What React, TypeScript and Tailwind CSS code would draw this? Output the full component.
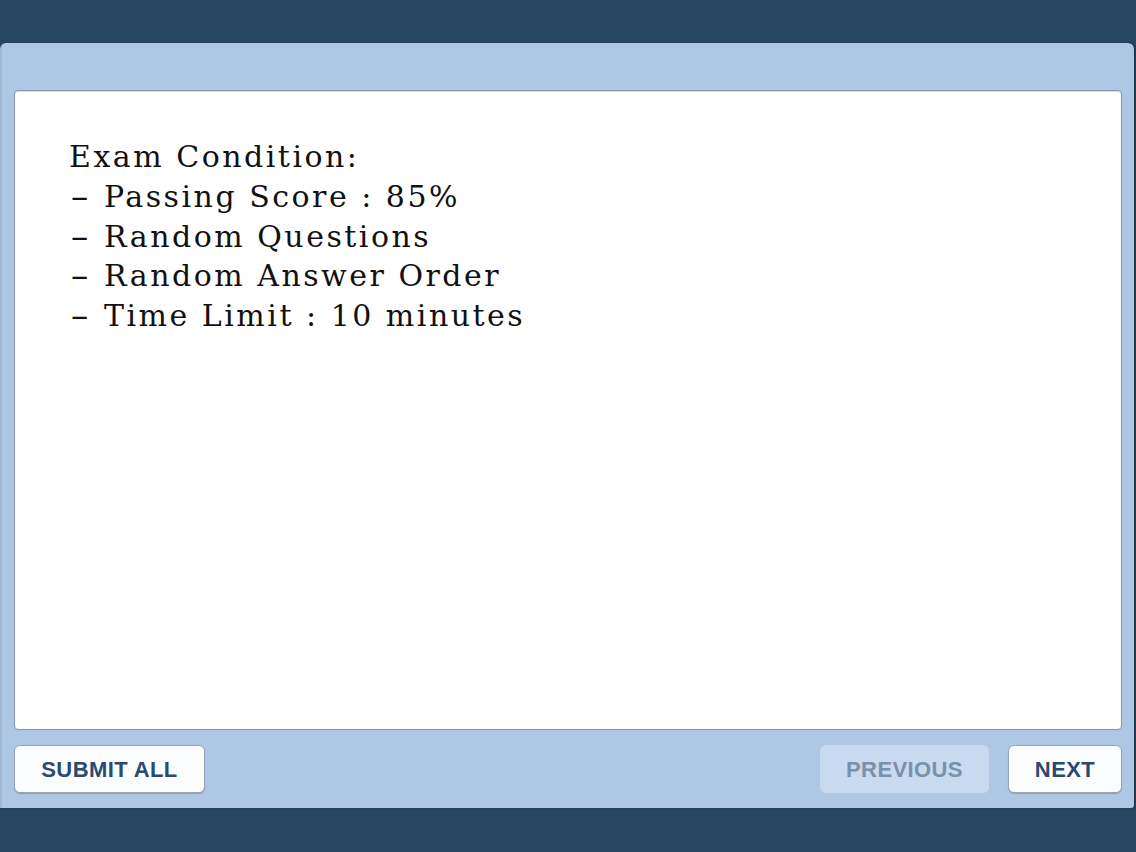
import React from "react";

export default function App() {
  const lines: [boolean, string][] = [
    [false, "Exam Condition:"],
    [true, "Passing Score : 85%"],
    [true, "Random Questions"],
    [true, "Random Answer Order"],
    [true, "Time Limit : 10 minutes"],
  ];
  return (
    <div className="h-[852px] w-full bg-[#264661] pt-[43px] pb-[44px] overflow-hidden">
      <div className="mr-[2px] h-full flex flex-col rounded-t-[6px] rounded-br-[3px] bg-[#aec7e4] border-l-2 border-[#9fb7d3] pl-[12px] pr-[12px] pt-[47px] pb-[15px] shadow-[2px_0_2px_rgba(0,0,0,0.25)]">
        <div className="flex-1 rounded-[4px] bg-white border border-[#8796a8] shadow-[inset_0_1px_1px_rgba(0,0,0,0.15)] pl-[54px] pt-[46px]">
          <div
            className="text-[30px] leading-[39.75px] text-[#111] tracking-[2.5px]"
            style={{ fontFamily: '"DejaVu Serif", "Liberation Serif", serif' }}
          >
            {lines.map(([dash, l]) => (
              <div key={l} className="whitespace-pre">
                {dash && (
                  <span className="inline-block w-[35px]">
                    <span className="inline-block origin-left scale-x-[1.9] ml-[1px]">-</span>
                  </span>
                )}
                {l}
              </div>
            ))}
          </div>
        </div>
        <div
          className="mt-[15px] flex items-center gap-[19px]"
          style={{ fontFamily: '"Liberation Sans", Arial, sans-serif' }}
        >
          <button className="h-[48px] w-[191px] rounded-[6px] bg-[#fbfcfe] border border-[#97a4b5] shadow-[0_1px_1px_rgba(0,0,0,0.2)] text-[22px] font-bold tracking-[0.4px] text-[#2c4a6e]">
            SUBMIT ALL
          </button>
          <div className="flex-1" />
          <button className="h-[48px] w-[169px] rounded-[6px] bg-[#c8daef] text-[22px] font-bold tracking-[0.4px] text-[#7891ad]">
            PREVIOUS
          </button>
          <button className="h-[48px] w-[114px] rounded-[6px] bg-[#fbfcfe] border border-[#97a4b5] shadow-[0_1px_1px_rgba(0,0,0,0.2)] text-[22px] font-bold tracking-[0.4px] text-[#2c4a6e]">
            NEXT
          </button>
        </div>
      </div>
    </div>
  );
}
